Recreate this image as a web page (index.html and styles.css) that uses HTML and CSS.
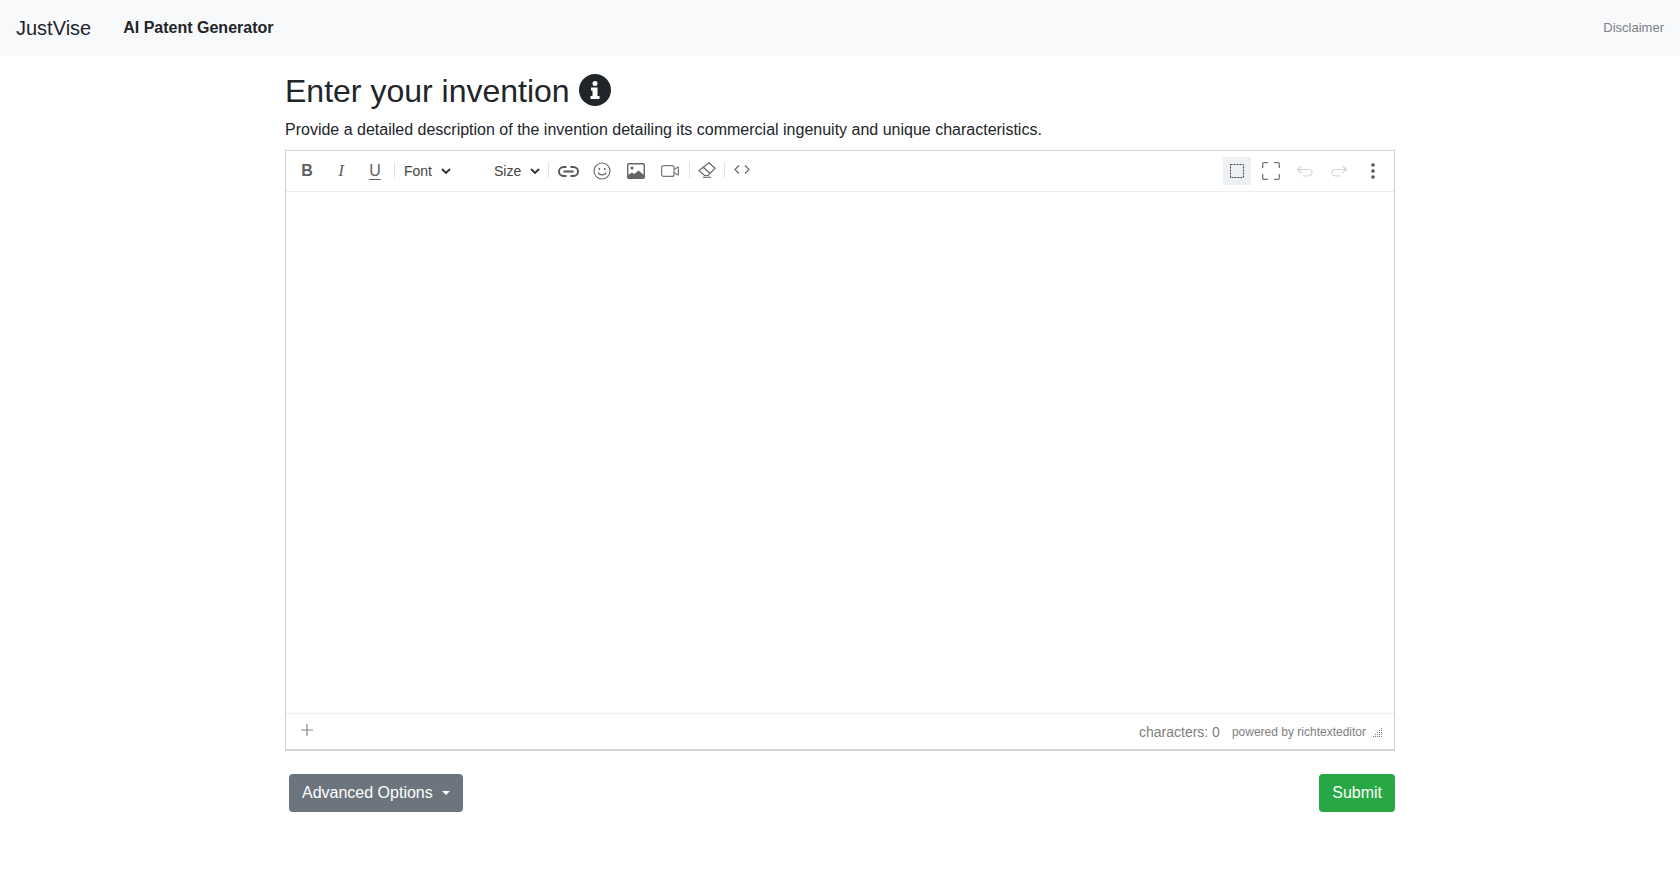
FILE: index.html
```html
<!DOCTYPE html>
<html lang="en">
<head>
<meta charset="utf-8">
<title>AI Patent Generator</title>
<link rel="stylesheet" href="styles.css">
</head>
<body>
<nav class="navbar">
  <a class="brand">JustVise</a>
  <a class="nav-title">AI Patent Generator</a>
  <a class="nav-link">Disclaimer</a>
</nav>
<main class="container">
  <div class="heading">
    <h2>Enter your invention</h2>
    <svg class="info" viewBox="0 0 32 32"><circle cx="16" cy="16" r="16" fill="#212529"/><circle cx="16" cy="9.500" r="2.500" fill="#fff"/><path d="M12 13.500h6.500v8.500H20.500v3H11.500v-3h2V16.500H12z" fill="#fff"/></svg>
  </div>
  <p class="lead">Provide a detailed description of the invention detailing its commercial ingenuity and unique characteristics.</p>
  <section class="editor">
    <div class="toolbar">
      <div class="tools">
        <span class="tool"><span class="t-b">B</span></span>
        <span class="tool"><span class="t-i">I</span></span>
        <span class="tool"><span class="t-u">U</span></span>
        <span class="sep sep-l"></span>
        <span class="drop drop-font">Font <svg class="chev" viewBox="0 0 10 7"><path d="M1 1l4 4 4-4" fill="none" stroke="#333" stroke-width="1.900"/></svg></span>
        <span class="drop drop-size">Size <svg class="chev" viewBox="0 0 10 7"><path d="M1 1l4 4 4-4" fill="none" stroke="#333" stroke-width="1.900"/></svg></span>
        <span class="sep sep-size"></span>
        <span class="tool"><svg width="21" height="11" viewBox="0 0 21 11"><path d="M8.500 1H5.500a4.500 4.500 0 0 0 0 9h3M12.500 1h3a4.500 4.500 0 0 1 0 9h-3M5.500 5.500h10" fill="none" stroke="#555" stroke-width="1.900"/></svg></span>
        <span class="tool"><svg width="18" height="18" viewBox="0 0 18 18"><circle cx="9" cy="9" r="8" fill="none" stroke="#666" stroke-width="1.100"/><circle cx="6.300" cy="7" r="1" fill="#666"/><circle cx="11.700" cy="7" r="1" fill="#666"/><path d="M5 10.500c1 3.200 7 3.200 8 0" fill="none" stroke="#666" stroke-width="1.100"/></svg></span>
        <span class="tool"><svg width="18" height="16" viewBox="0 0 18 16"><rect x=".7" y=".7" width="16.600" height="14.600" rx="1.200" fill="none" stroke="#666" stroke-width="1.400"/><circle cx="5" cy="5" r="1.600" fill="#666"/><path d="M1 15v-3l4-2.500 2.500 1.500 4-3.500 5.500 4.500v3z" fill="#666"/></svg></span>
        <span class="tool"><svg width="18" height="12" viewBox="0 0 18 12"><rect x=".6" y=".6" width="12.400" height="10.800" rx="2" fill="none" stroke="#777" stroke-width="1.200"/><path d="m13.300 4.500 3.500-2.500q.6 0 .6.600v6.800q0 .6-.6.600l-3.500-2.500" fill="none" stroke="#777" stroke-width="1.200"/></svg></span>
        <span class="sep sep-l"></span>
        <span class="tool"><svg class="ic-up" width="18" height="16" viewBox="0 0 18 16"><path d="M11 .8 17 6.300 10 13.500H6.500L1 8.500zM5 5l6.500 6" fill="none" stroke="#666" stroke-width="1.200"/><path d="M5 15.300h8" stroke="#666" stroke-width="1.100"/></svg></span>
        <span class="sep"></span>
        <span class="tool"><svg class="ic-up" width="16" height="9" viewBox="0 0 16 9"><path d="M5 .5 1 4.500l4 4M11 .5l4 4-4 4" fill="none" stroke="#666" stroke-width="1.100"/></svg></span>
      </div>
      <div class="tools">
        <span class="tool tool-active"><svg class="ic-box" width="14" height="14" viewBox="0 0 14 14"><rect x=".5" y=".5" width="13" height="13" fill="none" stroke="#444" stroke-dasharray="2 1"/></svg></span>
        <span class="tool"><svg width="18" height="18" viewBox="0 0 18 18"><path d="M.7 6V2Q.7.700 2 .700h4M12 .700h4q1.300 0 1.300 1.300v4M17.300 12v4q0 1.300-1.300 1.300h-4M6 17.300H2Q.7 17.300.7 16v-4" fill="none" stroke="#777" stroke-width="1.300"/></svg></span>
        <span class="tool"><svg width="18" height="12" viewBox="0 0 18 12"><path d="M5.500 1 1.500 4.500 5.500 8M1.500 4.500H12a4 3.200 0 0 1 0 6.500H7" fill="none" stroke="#d4d4d4" stroke-width="1.200"/></svg></span>
        <span class="tool"><svg width="18" height="12" viewBox="0 0 18 12"><path d="m12.500 1 4 3.500-4 3.500M16.500 4.500H6a4 3.200 0 0 0 0 6.500h5" fill="none" stroke="#d4d4d4" stroke-width="1.200"/></svg></span>
        <span class="tool"><svg width="4" height="16" viewBox="0 0 4 16"><circle cx="2" cy="2" r="1.800" fill="#555"/><circle cx="2" cy="8" r="1.800" fill="#555"/><circle cx="2" cy="14" r="1.800" fill="#555"/></svg></span>
      </div>
    </div>
    <div class="edit-area"></div>
    <div class="status">
      <svg class="plus" width="12" height="12" viewBox="0 0 12 12"><path d="M6 0v12M0 6h12" stroke="#888" stroke-width="1.200"/></svg>
      <div class="status-right">
        <span class="count">characters: 0</span>
        <span class="powered">powered by richtexteditor</span>
        <svg class="grip" width="10" height="9" viewBox="0 0 10 9"><path d="M9.500 0v9M7.500 2v7M5.500 4v5M3.500 6v3M1.500 8v1" stroke="#777" stroke-width="1" stroke-dasharray="1 1"/></svg>
      </div>
    </div>
  </section>
  <div class="actions">
    <button class="btn btn-secondary">Advanced Options<span class="caret"></span></button>
    <button class="btn btn-success">Submit</button>
  </div>
</main>
</body>
</html>
```
FILE: styles.css
```css
* { box-sizing: border-box; }
html, body { margin: 0; }
body {
  font-family: "Liberation Sans", Arial, sans-serif;
  font-size: 16px;
  line-height: 1.5;
  color: #212529;
  background: #fff;
}
.navbar {
  display: flex;
  align-items: center;
  height: 56px;
  padding: 0 16px;
  background: #f8f9fa;
}
.brand { font-size: 20px; margin-right: 32px; }
.nav-title { font-weight: 700; }
.nav-link { margin-left: auto; font-size: 13px; color: #7b7f83; }
.container {
  width: 1110px;
  margin: 0 auto;
  padding-top: 12px;
}
.heading { display: flex; align-items: center; gap: 9px; height: 46px; }
h2 { margin: 0; font-size: 32px; font-weight: 400; line-height: 46px; }
.info { width: 32px; height: 32px; margin-bottom: 3px; }
.lead { margin: 4px 0 8px; line-height: 24px; }
.editor {
  display: flex;
  flex-direction: column;
  height: 601px;
  border: 1px solid #d3d3d3;
  border-bottom-width: 2px;
}
.toolbar {
  display: flex;
  justify-content: space-between;
  align-items: center;
  height: 41px;
  padding: 0 4px;
  border-bottom: 1px solid #ececec;
  flex: none;
}
.tools { display: flex; align-items: center; }
.tool {
  display: flex;
  align-items: center;
  justify-content: center;
  width: 34px;
  height: 28px;
  font-size: 16px;
  color: #5f5f5f;
}
.tool-active { width: 28px; margin-right: 3px; background: #edf0f3; }
.ic-up { margin-top: -3px; }
.ic-box { margin-top: -1px; }
.t-b { font-weight: 700; }
.t-i { font-family: "Liberation Serif", serif; font-style: italic; font-size: 17px; }
.t-u { text-decoration: underline; text-underline-offset: 3px; }
.sep { width: 1px; height: 16px; background: #e4e4e4; margin-top: -3px; }
.sep-l { margin-left: 2px; }
.sep-size { margin-right: 2px; }
.drop {
  display: flex;
  align-items: center;
  gap: 9px;
  font-size: 14px;
  color: #444;
}
.drop-font { width: 99px; padding-left: 9px; }
.drop-size { width: 54px; }
.chev { width: 10px; height: 7px; }
.edit-area { flex: 1; }
.status {
  display: flex;
  justify-content: space-between;
  align-items: center;
  height: 36px;
  flex: none;
  padding: 0 12px 0 15px;
  border-top: 1px solid #ececec;
}
.plus { margin-top: -3px; }
.status-right { display: flex; align-items: center; padding-top: 1px; color: #808080; }
.count { font-size: 14px; margin-right: 12px; }
.powered { font-size: 12px; margin-right: 6px; }
.actions {
  display: flex;
  justify-content: space-between;
  margin-top: 23px;
  padding-left: 4px;
}
.btn {
  height: 38px;
  padding: 0 12px;
  border: 1px solid transparent;
  border-radius: 4px;
  font: 16px/1.5 "Liberation Sans", Arial, sans-serif;
  color: #fff;
}
.btn-secondary { background: #6c757d; }
.btn-success { background: #28a745; }
.caret {
  display: inline-block;
  margin-left: 9px;
  vertical-align: 3px;
  border-top: 4.800px solid #fff;
  border-left: 4.800px solid transparent;
  border-right: 4.800px solid transparent;
}
```
